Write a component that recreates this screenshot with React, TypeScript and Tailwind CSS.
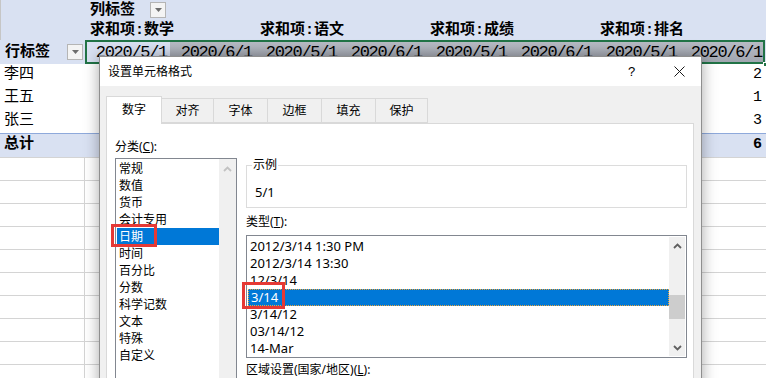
import React from 'react';

const COLS: string[] = ['求和项:数学', '求和项:语文', '求和项:成绩', '求和项:排名'];
const DATES: string[] = ['2020/5/1', '2020/6/1', '2020/5/1', '2020/6/1', '2020/5/1', '2020/6/1', '2020/5/1', '2020/6/1'];
const ROWS: { name: string; value: string }[] = [
  { name: '李四', value: '2' },
  { name: '王五', value: '1' },
  { name: '张三', value: '3' }
];
const TABS: { label: string; w: string }[] = [
  { label: '对齐', w: 'w-[52px]' },
  { label: '字体', w: 'w-[54px]' },
  { label: '边框', w: 'w-[54px]' },
  { label: '填充', w: 'w-[54px]' },
  { label: '保护', w: 'w-[52px]' }
];
const CATEGORIES: string[] = ['常规', '数值', '货币', '会计专用', '日期', '时间', '百分比', '分数', '科学记数', '文本', '特殊', '自定义'];
const TYPES: string[] = ['2012/3/14 1:30 PM', '2012/3/14 13:30', '12/3/14', '3/14', '3/14/12', '03/14/12', '14-Mar'];

function DropButton() {
  return (
    <div className="w-[16px] h-[16px] bg-[#f4f4f4] border border-[#b5b5b5] flex items-center justify-center">
      <svg width="7" height="4" viewBox="0 0 7 4">
        <path d="M0 0 L7 0 L3.5 4 Z" fill="#6d6d6d" />
      </svg>
    </div>
  );
}

function Chevron({ up, color }: { up: boolean; color: string }) {
  return (
    <svg width="9" height="6" viewBox="0 0 9 6">
      <path d={up ? 'M1 5 L4.5 1.5 L8 5' : 'M1 1 L4.5 4.5 L8 1'} fill="none" stroke={color} strokeWidth="1.8" />
    </svg>
  );
}

export default function App() {
  return (
    <div className="relative w-[766px] h-[378px] overflow-hidden bg-white text-black font-['Liberation_Mono','Noto_Sans_CJK_SC',monospace]">

      {/* pivot header */}
      <div className="bg-[#d9e1f2] border-l border-[#c6c6c6]">
        <div className="flex h-[20px] items-center">
          <div className="w-[84px]" />
          <div className="flex items-center pl-[5px] gap-[15px]">
            <span className="text-[15px] font-bold leading-none">列标签</span>
            <DropButton />
          </div>
        </div>
        <div className="flex h-[20px] items-center">
          <div className="w-[84px]" />
          {COLS.map((c, i) => (
            <div key={i} className="w-[170px] pl-[5px] text-[15px] font-bold leading-none">{c}</div>
          ))}
        </div>
      </div>

      <div className="flex h-[24px] bg-[#d9e1f2]">
        <div className="w-[85px] flex items-center pl-[5px] justify-between pr-[2px]">
          <span className="text-[15px] font-bold leading-none">行标签</span>
          <DropButton />
        </div>
        <div className="relative flex outline-2 outline-[#217346] -outline-offset-2">
          {DATES.map((d, i) => (
            <div
              key={i}
              className={`w-[85px] flex items-center justify-end pr-[3px] pt-[2px] text-[17px] tracking-[-1.3px] ${i === 0 ? 'bg-[#d9e1f2]' : 'bg-gradient-to-b from-[#b9bdc6] to-[#9fa4ae]'}`}
            >
              {d}
            </div>
          ))}
          <div className="absolute right-[-3px] bottom-[-3px] w-[5px] h-[5px] bg-[#217346] border border-white" />
        </div>
      </div>

      {ROWS.map(r => (
        <div key={r.name} className="flex h-[23px] items-center justify-between px-[4px] text-[15px]">
          <span>{r.name}</span>
          <span>{r.value}</span>
        </div>
      ))}

      <div className="flex h-[24px] items-center justify-between px-[4px] text-[15px] font-bold bg-[#d9e1f2] border-t border-[#8ea9db]">
        <span>总计</span>
        <span>6</span>
      </div>

      {Array.from({ length: 10 }).map((_, i) => (
        <div key={i} className="flex h-[23px] border-t border-[#d4d4d4]">
          <div className="w-[85px] border-r border-[#d4d4d4]" />
        </div>
      ))}

      {/* format cells dialog */}
      <div className="absolute left-[99px] top-[56px] w-[603px] h-[340px] border border-[#8f8f8f] bg-[#f0f0f0] shadow-[0_0_14px_rgba(0,0,0,0.35)] font-['Noto_Sans','Noto_Sans_CJK_SC',sans-serif] text-[12px]">
        <div className="h-[29px] bg-white flex items-center pl-[8px] pr-[16px]">
          <span className="flex-1">设置单元格格式</span>
          <span className="w-[12px] text-[13px] mr-[34px] font-['Liberation_Sans',sans-serif]">?</span>
          <svg width="11" height="11" viewBox="0 0 11 11">
            <path d="M0.5 0.5 L10.5 10.5 M10.5 0.5 L0.5 10.5" stroke="#1a1a1a" strokeWidth="1" />
          </svg>
        </div>

        <div className="px-[6px] pt-[9px]">
          <div className="flex items-end h-[28px]">
            <div className="w-[56px] h-[28px] bg-white border border-b-0 border-[#d9d9d9] flex items-center justify-center relative z-10 -mb-px pb-[1px]">数字</div>
            {TABS.map(t => (
              <div key={t.label} className={`${t.w} h-[25px] border border-l-0 border-[#d9d9d9] flex items-center justify-center`}>{t.label}</div>
            ))}
          </div>

          <div className="w-[588px] h-[300px] bg-white border border-[#d9d9d9] flex pl-[8px] pr-[6px]">
            {/* left column */}
            <div className="w-[122px] pt-[14px] shrink-0">
              <div className="h-[18px] leading-[18px]">分类(<span className="underline">C</span>):</div>
              <div className="mt-[2px] h-[240px] border border-[#828790] flex">
                <div className="flex-1 pt-px pl-px">
                  {CATEGORIES.map((c, i) => (
                    <div key={c} className={`h-[17px] leading-[17px] pl-[2px] ${i === 4 ? 'bg-[#0078d7] text-white' : ''}`}>{c}</div>
                  ))}
                </div>
                <div className="w-[17px] bg-[#f0f0f0] flex justify-center pt-[7px]">
                  <Chevron up color="#c2c2c2" />
                </div>
              </div>
            </div>

            {/* right column */}
            <div className="flex-1 ml-[9px] pt-[41px]">
              <div className="relative h-[43px] border border-[#dcdcdc]">
                <span className="absolute -top-[10px] left-[5px] bg-white px-px leading-[18px]">示例</span>
                <div className="pt-[17px] pl-[8px] leading-[18px] text-[13px]">5/1</div>
              </div>
              <div className="mt-[6px] h-[16px] leading-[16px]">类型(<span className="underline">T</span>):</div>
              <div className="mt-[5px] h-[123px] border border-[#828790] flex">
                <div className="flex-1 pt-[2px] pl-px text-[13px]">
                  {TYPES.map((t, i) => (
                    <div
                      key={t}
                      className={`h-[17px] pl-[2px] ${i === 3 ? 'bg-[#0078d7] text-white border border-dotted border-[#e8a33b] leading-[15px]' : 'leading-[17px]'}`}
                    >
                      {t}
                    </div>
                  ))}
                </div>
                <div className="w-[16px] my-px mr-px bg-[#f0f0f0] flex flex-col items-center">
                  <div className="h-[17px] flex items-center justify-center">
                    <Chevron up color="#606060" />
                  </div>
                  <div className="mt-[41px] w-[16px] h-[24px] bg-[#cdcdcd]" />
                  <div className="flex-1" />
                  <div className="h-[17px] flex items-center justify-center">
                    <Chevron up={false} color="#606060" />
                  </div>
                </div>
              </div>
              <div className="mt-[4px] leading-[16px]">区域设置(国家/地区)(<span className="underline">L</span>):</div>
            </div>
          </div>
        </div>
      </div>

      {/* red annotation boxes */}
      <div className="absolute left-[111px] top-[224px] w-[46px] h-[23px] border-[3px] border-[#e53935]" />
      <div className="absolute left-[242px] top-[282px] w-[43px] h-[27px] border-[3px] border-[#e53935]" />
    </div>
  );
}
